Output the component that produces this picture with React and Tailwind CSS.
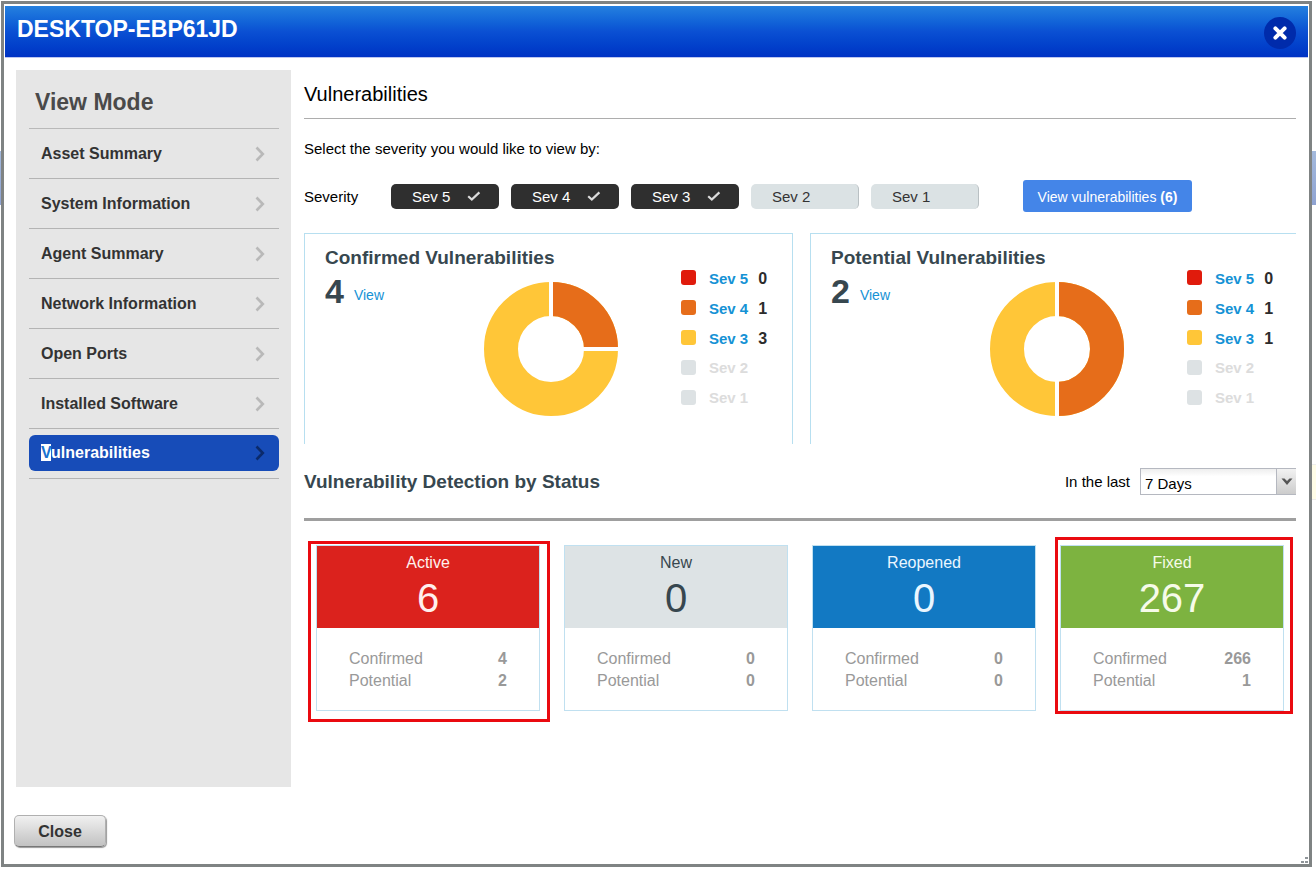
import React from "react";

const modes = [
  "Asset Summary",
  "System Information",
  "Agent Summary",
  "Network Information",
  "Open Ports",
  "Installed Software",
];

const severities = [
  { label: "Sev 5", on: true },
  { label: "Sev 4", on: true },
  { label: "Sev 3", on: true },
  { label: "Sev 2", on: false },
  { label: "Sev 1", on: false },
];

const swatches = ["bg-[#e01b0c]", "bg-[#e66d1a]", "bg-[#ffc638]", "bg-[#dde2e4]", "bg-[#dde2e4]"];

const stats = [
  { name: "Active", total: 6, confirmed: 4, potential: 2, head: "bg-[#db221d] text-[#fff0ee]", mark: "-top-[5px] -right-[11px] -bottom-3 -left-[9px]" },
  { name: "New", total: 0, confirmed: 0, potential: 0, head: "bg-[#dde3e5] text-[#37474f]" },
  { name: "Reopened", total: 0, confirmed: 0, potential: 0, head: "bg-[#1279c3] text-[#eaf6ff]" },
  { name: "Fixed", total: 267, confirmed: 266, potential: 1, head: "bg-[#7db340] text-[#f6fbe9]", mark: "-top-[9px] -right-[10px] -bottom-1 -left-[6px]" },
];

function Chevron({ className }) {
  return (
    <svg className={className} width="10" height="16" viewBox="0 0 10 16" fill="none" stroke="currentColor" strokeWidth="2.6" aria-hidden="true">
      <path d="M1.5 1.5 L7.8 8 L1.5 14.5" />
    </svg>
  );
}

function Check() {
  return (
    <svg className="mb-[3px]" width="14" height="11" viewBox="0 0 14 11" fill="none" stroke="#dcdcdc" strokeWidth="2.2" aria-hidden="true">
      <path d="M1.2 5.2 L4.8 8.6 L12.4 1.4" />
    </svg>
  );
}

function Donut({ quarter }) {
  return (
    <svg className="mt-3 shrink-0" width="134" height="134" viewBox="-67 -67 134 134" aria-hidden="true">
      <circle r="50" fill="none" stroke="#ffc638" strokeWidth="34" />
      <path d={quarter ? "M0 -50 A50 50 0 0 1 50 0" : "M0 -50 A50 50 0 0 1 0 50"} fill="none" stroke="#e66d1a" strokeWidth="34" />
      <path d={quarter ? "M0 -68 V-30 M30 0 H68" : "M0 -68 V-30 M0 30 V68"} stroke="#ffffff" strokeWidth="4" />
    </svg>
  );
}

function Summary({ title, total, counts, quarter, className }) {
  return (
    <section className={"flex h-[211px] border-t border-l border-[#b7dff0] pt-3 pl-5 " + className}>
      <div className="w-[356px] shrink-0">
        <h3 className="text-[19px] leading-6 font-bold text-[#37474f]">{title}</h3>
        <div className="flex">
          <div className="flex h-[42px] w-[159px] items-center gap-[10px]">
            <span className="text-[34px] leading-[42px] font-bold text-[#37474f]">{total}</span>
            <a href="#view" className="pt-2 text-sm text-[#1592d5]">View</a>
          </div>
          <Donut quarter={quarter} />
        </div>
      </div>
      <ul className="mt-[18px] flex flex-col">
        {severities.map((s, i) => (
          <li key={s.label} className="flex h-[30px] items-center text-[15px] font-bold">
            <span className={"mb-1 h-[15px] w-[15px] rounded-[3px] " + swatches[i]} />
            {s.on ? (
              <a href="#severity" className="ml-[13px] text-[#1592d5]">{s.label}</a>
            ) : (
              <span className="mb-[2px] ml-[13px] text-[#dcdcdc]">{s.label}</span>
            )}
            {s.on && <span className="ml-[10px] text-base text-[#2c2c2c]">{counts[i]}</span>}
          </li>
        ))}
      </ul>
    </section>
  );
}

export default function App() {
  return (
    <div className="relative flex min-h-screen bg-white pt-px pr-1 pb-[3px] pl-px font-['Liberation_Sans',Arial,sans-serif] text-black">
      <div className="absolute top-[151px] right-0 left-0 h-[54px] bg-linear-to-b from-[#a3b9dc] to-[#8fa3d2]" />
      <div className="absolute top-[464px] right-0 h-9 w-1 border-y border-[#eeeeee] bg-[#fffde8]" />
      <div className="relative flex min-w-0 flex-1 flex-col border-[3px] border-[#7f8383] bg-white">
        <header className="mx-px mt-[2px] flex h-[52px] items-center justify-between border-b border-[#bcc6f0] bg-linear-to-b from-[#2580df] via-[#0b50d3] to-[#0032c4] pr-3 pl-3">
          <h1 className="mb-[5px] text-[23px] leading-7 font-bold text-white">DESKTOP-EBP61JD</h1>
          <button type="button" aria-label="Close dialog" className="mt-[3px] flex h-8 w-8 items-center justify-center rounded-full bg-[#002bab]">
            <svg width="14" height="14" viewBox="0 0 14 14" stroke="#ffffff" strokeWidth="4" strokeLinecap="round" aria-hidden="true">
              <path d="M2.4 2.4 L11.6 11.6 M11.6 2.4 L2.4 11.6" />
            </svg>
          </button>
        </header>

        <div className="flex flex-1 pr-[13px] pl-3">
          <nav aria-label="View Mode" className="mt-3 w-[275px] shrink-0 bg-[#e6e6e6] pr-3 pl-[13px]">
            <h2 className="flex h-[59px] items-center border-b border-[#b9b9b9] pt-[6px] pl-[6px] text-[23px] font-bold text-[#4a4a4a]">View Mode</h2>
            <ul>
              {modes.map((m) => (
                <li key={m} className="border-b border-[#b4b4b4]">
                  <a href="#mode" className="flex h-[49px] items-center justify-between pr-[14px] pl-3 text-base font-bold text-[#333333]">
                    {m}
                    <Chevron className="text-[#b9b9b9]" />
                  </a>
                </li>
              ))}
              <li className="flex h-[50px] items-center border-b border-[#b4b4b4] pb-px">
                <a href="#mode" aria-current="page" className="flex h-9 flex-1 items-center justify-between rounded-md bg-[#174cb8] pr-[14px] pl-3 text-base font-bold text-white">
                  <span>
                    <span className="bg-white text-[#1a73d0]">V</span>ulnerabilities
                  </span>
                  <Chevron className="text-[#0b2a6b]" />
                </a>
              </li>
            </ul>
          </nav>

          <main className="ml-[13px] min-w-0 flex-1 pt-[22px]">
            <h2 className="border-b border-[#adadad] pb-[10px] text-xl leading-7">Vulnerabilities</h2>
            <p className="mt-5 text-[15px] leading-5">Select the severity you would like to view by:</p>

            <div className="mt-[21px] flex h-8 items-center text-[15px]">
              <span id="severity-label" className="w-[87px] pt-[2px]">Severity</span>
              <div role="group" aria-labelledby="severity-label" className="flex gap-3">
                {severities.map((s) => (
                  <button
                    key={s.label}
                    type="button"
                    aria-pressed={s.on}
                    className={
                      "flex h-[25px] w-[108px] items-center justify-between rounded-[5px] pt-[3px] pr-[18px] pl-[21px] " +
                      (s.on ? "bg-[#2f2f2f] text-white" : "border-r border-[#b9c0c3] bg-[#dbe2e4] text-[#333333]")
                    }
                  >
                    {s.label}
                    {s.on && <Check />}
                  </button>
                ))}
              </div>
              <button type="button" className="ml-11 h-8 w-[169px] rounded-[3px] bg-[#4485e8] pt-px text-sm text-white">
                View vulnerabilities <b>(6)</b>
              </button>
            </div>

            <div className="mt-[21px] grid grid-cols-[489fr_486fr] gap-[17px]">
              <Summary title="Confirmed Vulnerabilities" total={4} counts={[0, 1, 3]} quarter className="border-r" />
              <Summary title="Potential Vulnerabilities" total={2} counts={[0, 1, 1]} className="" />
            </div>

            <div className="mt-6 flex items-center justify-between border-b-[3px] border-[#9f9f9f] pb-[23px]">
              <h2 className="text-[19px] leading-6 font-bold text-[#37474f]">Vulnerability Detection by Status</h2>
              <div className="flex items-center text-[15px]">
                <label htmlFor="period" className="pt-[2px]">In the last</label>
                <div className="relative ml-[10px]">
                  <select id="period" defaultValue="7" className="block h-[27px] w-[156px] appearance-none border border-r-0 border-[#b5b8c0] bg-linear-to-b from-[#eeeeee] to-white to-30% pt-1 pl-1 text-[15px] leading-5">
                    <option value="7">7 Days</option>
                    <option value="30">30 Days</option>
                    <option value="90">90 Days</option>
                  </select>
                  <span className="pointer-events-none absolute inset-y-0 right-0 flex w-5 items-center justify-center border border-r-0 border-[#b5b8c0] bg-linear-to-b from-[#f2f2f2] to-[#cccccc]">
                    <svg width="12" height="8" viewBox="0 0 12 8" aria-hidden="true">
                      <path d="M0.5 0.5 H3.5 L6 3 L8.5 0.5 H11.5 L6 7 Z" fill="#555555" />
                    </svg>
                  </span>
                </div>
              </div>
            </div>

            <div className="mt-6 grid grid-cols-4">
              {stats.map((s) => (
                <section key={s.name} className="relative mx-3 border border-[#c0e0f0]">
                  <div className={"flex h-[82px] flex-col items-center pt-[7px] " + s.head}>
                    <h3 className="text-base leading-5">{s.name}</h3>
                    <p className="text-[40px] leading-[50px]">{s.total}</p>
                  </div>
                  <dl className="grid grid-cols-[1fr_auto] px-8 pt-5 pb-[18px] text-base leading-[22px] text-[#999999]">
                    <dt>Confirmed</dt>
                    <dd className="text-right font-bold">{s.confirmed}</dd>
                    <dt>Potential</dt>
                    <dd className="text-right font-bold">{s.potential}</dd>
                  </dl>
                  {s.mark && <span className={"pointer-events-none absolute border-[3px] border-[#ea0a10] " + s.mark} />}
                </section>
              ))}
            </div>
          </main>
        </div>

        <footer className="flex items-end justify-between pt-7">
          <button type="button" className="mb-[17px] ml-[10px] h-8 w-[92px] rounded-[5px] border border-[#b0b0b0] border-b-[#777777] bg-linear-to-b from-[#f1f1f1] to-[#c2c2c2] pt-[2px] text-base font-bold text-[#333333] shadow-[1px_1px_1px_#999999]">
            Close
          </button>
          <svg width="8" height="8" viewBox="0 0 8 8" fill="#8f9599" aria-hidden="true">
            <path d="M4 1h3v2h-3z M0 5h3v2h-3z M4 5h3v2h-3z" />
          </svg>
        </footer>
      </div>
    </div>
  );
}
